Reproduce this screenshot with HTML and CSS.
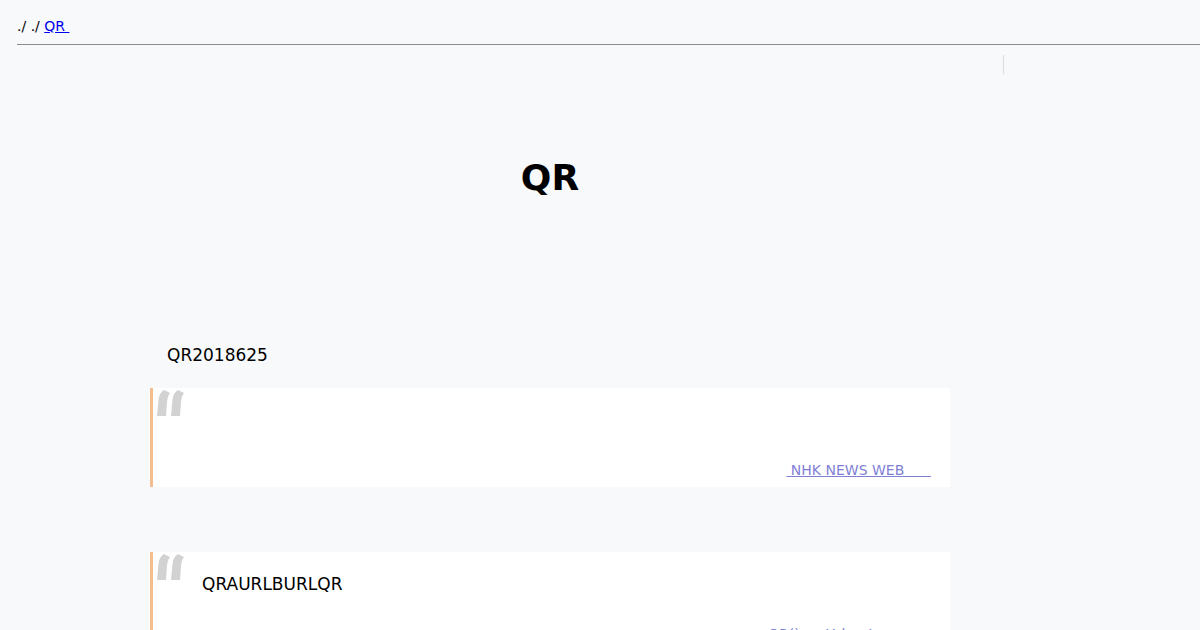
FILE: index.html
```html
<!DOCTYPE html>
<html lang="ja">
<head>
  <meta charset="UTF-8">
  <meta name="viewport" content="width=device-width, initial-scale=1.0">
  <title>QR</title>
  <link rel="stylesheet" href="styles.css">
</head>
<body>

  <!-- Breadcrumb -->
  <nav class="crumbs">
    <span>./</span> <span>./</span> <a href="#">QR&nbsp;</a>
  </nav>

  <div class="page">
    <main class="main">
      <h1 class="title">QR</h1>

      <p class="lead">QR2018625</p>

      <blockquote class="quote">
        <svg class="quote-mark" width="30" height="28" viewBox="0 0 30 28" aria-hidden="true">
          <path d="M10 1 Q5 4 4.5 11 L3 27 H12 L13 13 Q13.5 7 16 4 Z"/>
          <path d="M24 1 Q19 4 18.5 11 L17 27 H26 L27 13 Q27.5 7 30 4 Z"/>
        </svg>
        <div class="quote-body"></div>
        <div class="quote-src"><a href="#"> NHK NEWS WEB      </a></div>
      </blockquote>

      <blockquote class="quote">
        <svg class="quote-mark" width="30" height="28" viewBox="0 0 30 28" aria-hidden="true">
          <path d="M10 1 Q5 4 4.5 11 L3 27 H12 L13 13 Q13.5 7 16 4 Z"/>
          <path d="M24 1 Q19 4 18.5 11 L17 27 H26 L27 13 Q27.5 7 30 4 Z"/>
        </svg>
        <div class="quote-body"><p>QRAURLBURLQR</p></div>
        <div class="quote-src"><a href="#">QR()      Yahoo!             </a></div>
      </blockquote>
    </main>

    <aside class="side"></aside>
  </div>

</body>
</html>
```

FILE: styles.css
```css
/* General */
body {
  margin: 0;
  padding: 0;
  background: #f8f9fb;
  font-family: 'DejaVu Sans', Verdana, sans-serif;
  color: #000;
}

a {
  color: #0000ee;
}

/* Breadcrumb */
.crumbs {
  margin-left: 17px;
  padding-top: 17px;
  padding-bottom: 9px;
  border-bottom: 1px solid #8c8c8c;
  font-size: 14px;
  line-height: 18px;
}

/* Layout */
.page {
  display: flex;
}

.main {
  width: 800px;
  margin-left: 150px;
}

.side {
  margin-left: 53px;
  margin-top: 10px;
  width: 1px;
  height: 19px;
  background: #dcdcdc;
}

.title {
  margin: 112px 0 0;
  text-align: center;
  font-size: 36px;
  line-height: 42px;
  font-weight: bold;
}

.lead {
  margin: 144px 0 0 17px;
  font-size: 17px;
  line-height: 24px;
}

/* Quotes */
.quote {
  position: relative;
  margin: 21px 0 65px;
  padding: 0 19px 0 49px;
  background: #fff;
  border-left: 3px solid #f5bd8e;
  min-height: 99px;
}

.quote-mark {
  position: absolute;
  left: 1px;
  top: 1px;
  fill: #d2d2d2;
}

.quote-body {
  min-height: 73px;
}

.quote-body p {
  margin: 0;
  padding-top: 20px;
  font-size: 17px;
  line-height: 24px;
}

.quote-src {
  text-align: right;
  font-size: 14px;
  line-height: 18px;
  padding-bottom: 8px;
}

.quote-src a {
  color: #7f7fd5;
  white-space: pre;
}
```
